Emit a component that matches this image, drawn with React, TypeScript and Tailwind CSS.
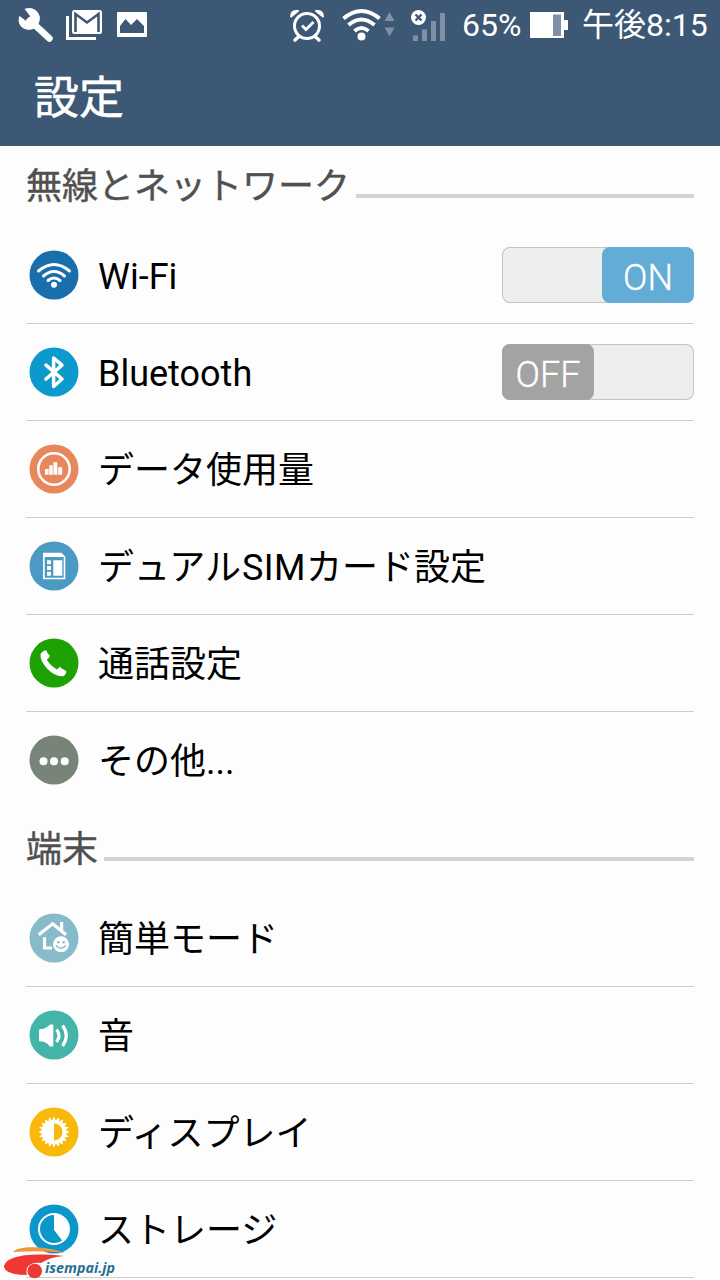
import React from 'react';

function StatusBar() {
  return (
    <div className="flex h-[50px] items-center pl-[17px] text-[32px] leading-none text-white">
      {/* wrench */}
      <svg className="h-[50px] w-[37px] shrink-0" viewBox="17 0 37 50" fill="none" stroke="#fff" strokeLinecap="round">
        <path d="M30 20.500L49.500 38.500" strokeWidth="6.500" />
        <path
          d="M25.500 9Q33 7 37.500 12.500Q41 17 38.500 23L33.500 28.500Q26 31 21 26Q18 22 19.500 16.500L25.500 21L30.500 16.500Z"
          fill="#fff"
          strokeWidth="1"
          strokeLinejoin="round"
        />
      </svg>

      {/* mail */}
      <svg className="ml-3 h-[50px] w-9 shrink-0" viewBox="66 0 36 50" fill="none">
        <path d="M67.500 16v22.500H96" stroke="#fff" strokeWidth="3" />
        <rect x="72" y="10" width="30" height="24" rx="2.500" fill="#fff" />
        <path d="M75.500 32V14L87 22.500l11.500-8.500V32" stroke="#3d5875" strokeWidth="2.600" />
      </svg>

      {/* screenshot */}
      <svg className="ml-[15px] h-[50px] w-[30px] shrink-0" viewBox="117 0 30 50">
        <rect x="117" y="12" width="30" height="25" rx="1" fill="#fff" />
        <path d="M120 33v-7l5.500-7 5.500 6 6-6 7 7v7z" fill="#3d5875" />
      </svg>

      {/* alarm */}
      <svg className="ml-[142px] h-[50px] w-9 shrink-0" viewBox="289 0 36 50" fill="none" stroke="#fff" strokeLinecap="round">
        <circle cx="307" cy="26" r="12.500" strokeWidth="3" />
        <path d="M299 36.500l-4 3.500M315 36.500l4 3.500" strokeWidth="3.500" />
        <path d="M291 16.500c0-4.500 3-6 7-5.500zM323 16.500c0-4.500-3-6-7-5.500z" fill="#fff" strokeWidth="2" strokeLinejoin="round" />
        <path d="M302 25.500l4 4 7.500-7.500" strokeWidth="2.800" strokeLinecap="butt" />
      </svg>

      {/* wifi with traffic arrows */}
      <svg className="ml-[17px] h-[50px] w-[54px] shrink-0" viewBox="342 0 54 50" fill="none" stroke="#fff" strokeWidth="4">
        <path d="M343.500 18.500q18-15 36 0M348.500 25q13-11 26 0M354.500 31q7-6 14 0" />
        <circle cx="361.500" cy="36.500" r="4" fill="#fff" stroke="none" />
        <path d="M384.500 21l5-9 5 9zM384.500 27.500l5 9 5-9z" fill="#8290a5" stroke="none" />
      </svg>

      {/* second sim, no service */}
      <svg className="ml-[15px] h-[50px] w-[35px] shrink-0" viewBox="411 0 35 50">
        <path d="M413 35.500h5V41h-5zM422 29.500h5V41h-5zM431 21h5v20h-5zM440 13h5v28h-5z" fill="#8290a5" />
        <circle cx="418.500" cy="17.500" r="7.500" fill="#fff" />
        <path d="M415.500 14.500l6 6M421.500 14.500l-6 6" stroke="#3d5875" strokeWidth="2.400" />
      </svg>

      <span className="ml-4 w-[60px] whitespace-nowrap">65%</span>

      <svg className="ml-2 h-[50px] w-[38px] shrink-0" viewBox="530 0 38 50">
        <path d="M530 12h34v8h4v10h-4v8h-34z" fill="#fff" />
        <rect x="553" y="14.500" width="8" height="21.500" fill="#8290a5" />
      </svg>

      <span className="ml-[14px] whitespace-nowrap">午後8:15</span>
    </div>
  );
}

function Badge({ color, children }: { color: string; children: React.ReactNode }) {
  return (
    <svg className="h-[50px] w-[50px] shrink-0" viewBox="0 0 50 50" fill="none" stroke="#fff">
      <circle cx="25" cy="25" r="24.500" fill={color} stroke="none" />
      {children}
    </svg>
  );
}

const WifiIcon = () => (
  <Badge color="#196fac">
    <path d="M9.500 21q15.500-13 31 0M14.500 26q10.500-9 21 0M19 30.500q6-5 12 0" strokeWidth="3" strokeLinecap="round" />
    <circle cx="25" cy="34.700" r="3" fill="#fff" stroke="none" />
  </Badge>
);

const BluetoothIcon = () => (
  <Badge color="#0b9acb">
    <path d="M17 18.200L33 32l-8.400 7.500v-28.500l8.400 7.200L17 32" strokeWidth="3.500" strokeLinecap="round" strokeLinejoin="round" />
  </Badge>
);

const DataIcon = () => (
  <Badge color="#e9875c">
    <circle cx="25" cy="25" r="15.700" strokeWidth="2.600" />
    <path d="M16 25h3.600v5.700H16zM20.300 21.300h3.500v9.400h-3.500zM24.500 18.300h3.800v12.400h-3.800zM29.200 23.300h4v7.400h-4z" fill="#fff" stroke="none" />
  </Badge>
);

const SimIcon = () => (
  <Badge color="#4b9ac4">
    <path d="M14 11.700h18.500l3.800 4v22.600H14z" fill="#fff" stroke="none" />
    <path d="M15.700 16h19v20.700h-19z" fill="#4b9ac4" stroke="none" />
    <path d="M24.300 19.300h9v15.500h-9zM18 19.300h4v4h-4zM18 25h4v4h-4zM18 30.700h4v4h-4z" fill="#fff" stroke="none" />
  </Badge>
);

const PhoneIcon = () => (
  <Badge color="#1ea203">
    <path d="M11.500 16.500Q12.500 13.500 16.500 12.300L17.500 12.800Q18 15.500 20.800 17.800Q20.500 20 17.800 21.500Q21 27.500 28 31.500L30.800 28.700Q33.500 31.500 37 32.700L37.300 34Q36.500 38 33 38.300Q26 38.500 18.500 31Q11 23 11.500 16.500Z" fill="#fff" stroke="none" />
  </Badge>
);

const MoreIcon = () => (
  <Badge color="#798479">
    <g fill="#fff" stroke="none">
      <circle cx="14.500" cy="26.300" r="4" />
      <circle cx="25" cy="26.300" r="4" />
      <circle cx="35.700" cy="26.300" r="4" />
    </g>
  </Badge>
);

const HomeIcon = () => (
  <Badge color="#86bbca">
    <path d="M9.700 21.800l14-11 13.300 11" strokeWidth="3.200" />
    <path d="M32.600 9v9M15.500 24.300v10.700h7.500" strokeWidth="3.200" />
    <circle cx="32" cy="31.300" r="8" fill="#fff" stroke="none" />
    <circle cx="29.300" cy="29.300" r="1.200" fill="#86bbca" stroke="none" />
    <circle cx="34.700" cy="29.300" r="1.200" fill="#86bbca" stroke="none" />
    <path d="M27 32.500q5 5.500 10 0" stroke="#86bbca" strokeWidth="1.500" />
  </Badge>
);

const SoundIcon = () => (
  <Badge color="#42b4a8">
    <path d="M10 20.500q0-1.500 1.500-1.500h2.500q4-1 7-4.500h3.300v22H21q-3-4-7-5h-2.500Q10 31.500 10 30z" fill="#fff" stroke="none" />
    <path d="M27.500 19.500q5 6 0 12.500M33.500 15.500q7.500 10 0 20.500" strokeWidth="3.200" />
  </Badge>
);

const TEETH = 20;
const sunPoints = Array.from({ length: TEETH * 2 }, (_, i) => {
  const r = i % 2 === 0 ? 15.5 : 12;
  const a = (i * Math.PI) / TEETH - Math.PI / 2;
  return `${(25 + r * Math.cos(a)).toFixed(2)},${(25 + r * Math.sin(a)).toFixed(2)}`;
}).join(' ');

const DisplayIcon = () => (
  <Badge color="#f9b90a">
    <polygon points={sunPoints} fill="#fff" stroke="none" />
    <path d="M25 16.500a8.500 8.500 0 0 1 0 17z" fill="#f9b90a" stroke="none" />
  </Badge>
);

const StorageIcon = () => (
  <Badge color="#0b97ca">
    <circle cx="25" cy="25" r="15" strokeWidth="2" />
    <path d="M25 26V10a15 15 0 0 1 8.500 27z" fill="#fff" stroke="none" />
  </Badge>
);

function Toggle({ on }: { on: boolean }) {
  return (
    <div className={`ml-auto flex h-14 w-48 rounded-lg bg-[#eeeeed] ring-1 ring-inset ring-[#c4c4c4] ${on ? 'justify-end' : 'justify-start'}`}>
      <div
        className={`flex h-14 w-[92px] items-center justify-center rounded-lg pt-[5px] text-[36px] leading-none font-light text-white [-webkit-text-stroke:0.3px] ${
          on ? 'bg-[#62acd6]' : 'bg-[#a3a3a3]'
        }`}
      >
        {on ? 'ON' : 'OFF'}
      </div>
    </div>
  );
}

function SectionTitle({ title }: { title: string }) {
  return (
    <div className="flex h-[81px] items-start">
      <h2 className="pt-[23px] text-[36px] leading-[36px] whitespace-nowrap text-[#505050] [-webkit-text-stroke:0.4px]">{title}</h2>
      <div className="mt-12 ml-1.5 h-1 flex-1 bg-[#d4d4d4]" />
    </div>
  );
}

type Item = { label: React.ReactNode; icon: React.ReactNode; toggle?: boolean };

const wireless: Item[] = [
  { label: 'Wi-Fi', icon: <WifiIcon />, toggle: true },
  { label: 'Bluetooth', icon: <BluetoothIcon />, toggle: false },
  { label: 'データ使用量', icon: <DataIcon /> },
  {
    label: (
      <>
        デュアル<span className="ml-px tracking-[0.5px]">SIM</span>カード設定
      </>
    ),
    icon: <SimIcon />,
  },
  { label: '通話設定', icon: <PhoneIcon /> },
  { label: 'その他...', icon: <MoreIcon /> },
];

const device: Item[] = [
  { label: '簡単モード', icon: <HomeIcon /> },
  { label: '音', icon: <SoundIcon /> },
  { label: 'ディスプレイ', icon: <DisplayIcon /> },
  { label: 'ストレージ', icon: <StorageIcon /> },
];

function Row({ item, divider }: { item: Item; divider: boolean }) {
  return (
    <li className={`flex h-[97px] items-center border-b pl-[3px] ${divider ? 'border-[#cdcdcd]' : 'border-transparent'}`}>
      {item.icon}
      <span className="ml-[19px] pt-1 text-[36px] leading-[40px] whitespace-nowrap">{item.label}</span>
      {item.toggle !== undefined && <Toggle on={item.toggle} />}
    </li>
  );
}

function Watermark() {
  return (
    <svg className="absolute bottom-0 left-0 h-[36px] w-[130px]" viewBox="0 1244 130 36">
      <path d="M13 1252C18 1245 48 1246 65 1253Q45 1250 13 1252Z" fill="#f0953c" />
      <path d="M4 1267C5 1257 26 1252 64 1256Q50 1257 41 1263Q30 1262 27 1268Q26 1272 27 1275Q6 1275 4 1267Z" fill="#ee3834" />
      <circle cx="34.700" cy="1271" r="7.300" fill="#ee3834" />
      <text
        x="45"
        y="1273"
        textLength="70"
        lengthAdjust="spacingAndGlyphs"
        className="font-['Open_Sans',sans-serif] text-[15px] font-bold italic"
        fill="#256f93"
        stroke="#fff"
        strokeWidth="2"
        paintOrder="stroke"
      >
        isempai.jp
      </text>
    </svg>
  );
}

export default function App() {
  return (
    <div className="relative h-[1280px] w-[720px] overflow-hidden bg-[#fdfdfd] font-[Roboto,'Noto_Sans_CJK_JP',sans-serif] text-black">
      <header className="h-[146px] bg-[#3d5875]">
        <StatusBar />
        <h1 className="pt-[25px] pl-[34px] text-[45px] leading-[48px] text-white [-webkit-text-stroke:0.5px]">設定</h1>
      </header>

      <main className="px-[26px]">
        <SectionTitle title="無線とネットワーク" />
        <ul>
          {wireless.map((item, i) => (
            <Row key={i} item={item} divider={i < wireless.length - 1} />
          ))}
        </ul>
        <SectionTitle title="端末" />
        <ul>
          {device.map((item, i) => (
            <Row key={i} item={item} divider />
          ))}
        </ul>
      </main>

      <Watermark />
    </div>
  );
}
